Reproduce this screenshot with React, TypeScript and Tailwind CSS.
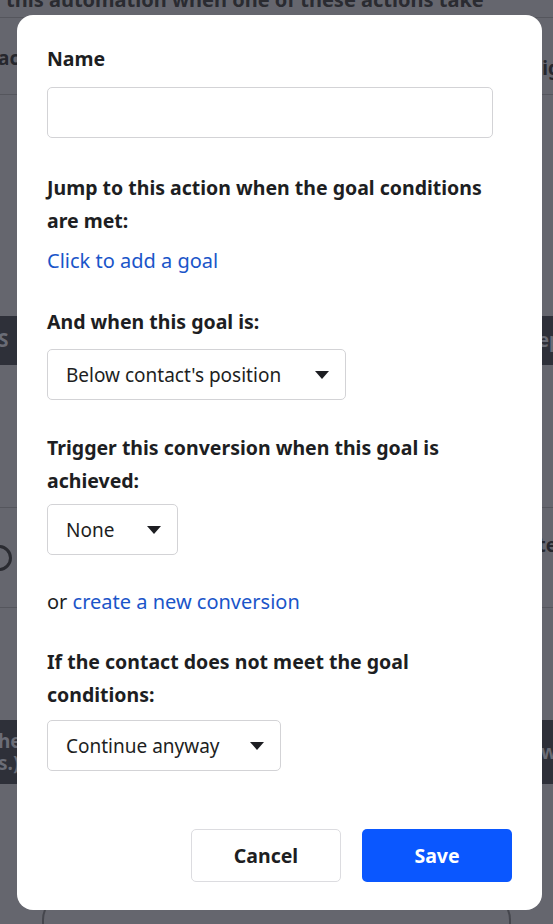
export default function App() {
  return (
    <div className="relative h-[924px] w-[553px] overflow-hidden bg-[#65666e] font-['Noto_Sans',sans-serif] text-[#1d1e22]">
      {/* dimmed page behind the modal */}
      <div className="flex flex-col text-[#26272d]">
        <div className="-mt-[12px] h-[29px] whitespace-nowrap px-[6px] text-[20px] font-bold leading-[24px] text-[#2a2b31]">
          this automation when one of these actions take
        </div>
        <div className="flex h-[78px] items-center justify-between border-y border-[#55565d] text-[19px] font-bold">
          <span className="-ml-[2px] mt-[4px]">ac</span>
          <span className="-mr-[7px] mt-[24px]">ig</span>
        </div>
        <div className="h-[221px]" />
        <div className="flex h-[49px] items-center justify-between bg-[#2e3039] text-[19px] font-bold text-[#6a6c76]">
          <span className="-ml-[2px]">S</span>
          <span className="-mr-[8px]">ep</span>
        </div>
        <div className="h-[143px] border-b border-[#55565d]" />
        <div className="flex h-[100px] items-center justify-between border-b border-[#55565d] text-[19px] font-bold">
          <span className="-ml-[14px] h-[26px] w-[26px] rounded-full border-[3px] border-[#2a2b31]" />
          <span className="-mr-[4px] mb-[24px]">te</span>
        </div>
        <div className="h-[112px]" />
        <div className="flex h-[64px] items-center justify-between bg-[#2e3039] text-[19px] font-bold leading-[22px] text-[#6a6c76]">
          <span className="-ml-[2px]">
            he
            <br />
            s.)
          </span>
          <span className="-mr-[4px]">w</span>
        </div>
        <div className="h-[108px]" />
        <div className="mx-[42px] h-[40px] rounded-t-[28px] border-x-2 border-t-2 border-[#45464d]" />
      </div>

      {/* modal */}
      <div className="absolute left-[17px] top-[15px] flex h-[895px] w-[525px] flex-col rounded-[16px] bg-white px-[30px] pt-[32px]">
        <label className="text-[19.5px] font-bold leading-[24px]">Name</label>
        <input className="mt-[16px] h-[51px] w-[446px] rounded-[5px] border border-[#d3d3d6] outline-none" />

        <p className="mt-[33px] text-[19.5px] font-bold leading-[33px]">
          Jump to this action when the goal conditions
          <br />
          are met:
        </p>
        <a className="mt-[12px] text-[20px] leading-[24px] text-[#1a55c9]">Click to add a goal</a>

        <p className="mt-[37px] text-[19.5px] font-bold leading-[24px]">And when this goal is:</p>
        <Select label="Below contact's position" width="w-[299px]" />

        <p className="mt-[31px] text-[19.5px] font-bold leading-[33px]">
          Trigger this conversion when this goal is
          <br />
          achieved:
        </p>
        <Select label="None" width="w-[131px]" mt="mt-[7px]" />

        <p className="mt-[35px] text-[20px] leading-[24px]">
          or <a className="text-[#1a55c9]">create a new conversion</a>
        </p>

        <p className="mt-[31px] text-[19.5px] font-bold leading-[33px]">
          If the contact does not meet the goal
          <br />
          conditions:
        </p>
        <Select label="Continue anyway" width="w-[234px]" mt="mt-[9px]" />

        <div className="mt-[58px] flex justify-end gap-[21px]">
          <button className="h-[53px] w-[150px] rounded-[5px] border border-[#dcdce0] bg-white text-[19.5px] font-bold">
            Cancel
          </button>
          <button className="h-[53px] w-[150px] rounded-[5px] bg-[#0a57ff] text-[19.5px] font-bold text-white">
            Save
          </button>
        </div>
      </div>
    </div>
  )
}

function Select({ label, width, mt = "mt-[15px]" }: { label: string; width: string; mt?: string }) {
  return (
    <div
      className={`${mt} ${width} flex h-[51px] items-center justify-between rounded-[5px] border border-[#d3d3d6] pl-[18px] pr-[16px]`}
    >
      <span className="text-[19px] leading-[24px]">{label}</span>
      <svg width="14" height="8" viewBox="0 0 14 8">
        <path d="M0 0h14L7 8z" fill="#1d1e22" />
      </svg>
    </div>
  )
}
